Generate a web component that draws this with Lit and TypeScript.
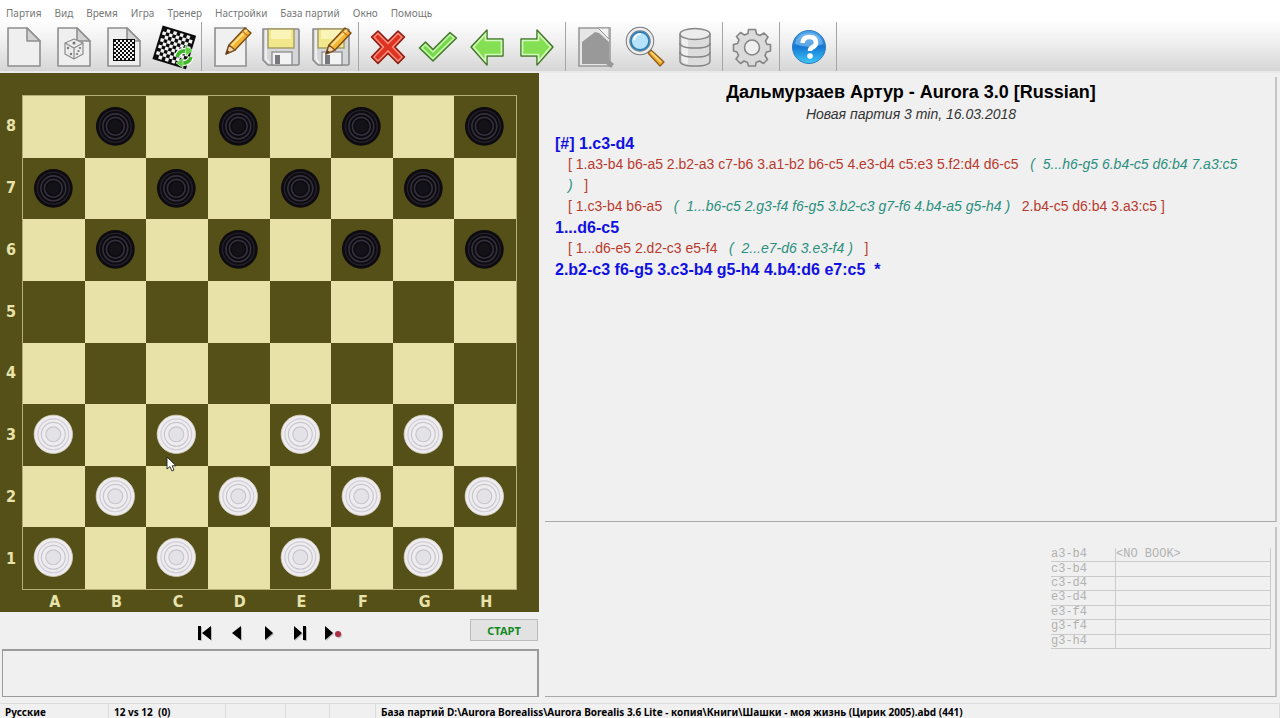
import { LitElement, html, svg, css } from "lit";
import { customElement } from "lit/decorators.js";

const page = svg`
  <path d="M6 3H25L38 16V41H6Z" fill="#efeff0" stroke="#8f8f8f" stroke-width="1.6" stroke-linejoin="round"/>
  <path d="M25 3V16H38Z" fill="#d2d2d2" stroke="#8f8f8f" stroke-width="1.6" stroke-linejoin="round"/>`;

const pencil = svg`
  <path d="M17 29L20 20L36 3L42 8L26 25Z" fill="#f5b431" stroke="#7a4d1c" stroke-width="1.5" stroke-linejoin="round"/>
  <path d="M22 21L38 5" stroke="#ffe08a" stroke-width="2"/>
  <path d="M33 6L39 11" stroke="#b9792a" stroke-width="1.2"/>
  <path d="M17 29L20 20L26 25Z" fill="#f0d3a6" stroke="#7a4d1c" stroke-width="1.2" stroke-linejoin="round"/>
  <path d="M17 29L18 25L21 27Z" fill="#5a3d28"/>`;

const floppy = svg`
  <path d="M4 4H39Q40 4 40 5V39Q40 40 39 40H9L4 35Z" fill="#d5d6d8" stroke="#8b8b8d" stroke-width="1.6" stroke-linejoin="round"/>
  <path d="M7 5V34L10 38" fill="none" stroke="#fff" stroke-width="1.2"/>
  <rect x="9" y="4" width="26" height="19" fill="#f3e78b" stroke="#a39c66" stroke-width="1.4"/>
  <rect x="12" y="5" width="20" height="9" fill="#faf4b9"/>
  <rect x="13" y="27" width="20" height="13" fill="#f3f3f4" stroke="#8b8b8d" stroke-width="1.3"/>
  <rect x="16" y="30" width="5" height="9" fill="#77787b"/>`;

const checks = (n: number, size: number) => {
  const out = [];
  for (let r = 0; r < n; r++)
    for (let c = 0; c < n; c++)
      if ((r + c) % 2) out.push(svg`<rect x=${(c * size) / n} y=${(r * size) / n} width=${size / n} height=${size / n} fill="#f2f2f2"/>`);
  return svg`<rect width=${size} height=${size} fill="#0c0c0c"/>${out}`;
};

const arrow = svg`
  <path d="M5 22L21 5V14H37V31H21V40Z" fill="#84e052" stroke="#47752f" stroke-width="1.5" stroke-linejoin="round"/>
  <path d="M7.5 22L19.5 9V15.5H35.5V29.5H19.5V36Z" fill="none" stroke="#d4f9be" stroke-width="1.6"/>`;

const icons: Record<string, unknown> = {
  "Новая партия": page,
  "Случайная позиция": svg`${page}
    <path d="M22 14L31 18V29L22 34L13 29V18Z" fill="#ececec" stroke="#8c8c8c" stroke-width="1.2" stroke-linejoin="round"/>
    <path d="M13 18L22 23L31 18M22 23V34" fill="none" stroke="#8c8c8c" stroke-width="1.2"/>
    <g fill="#777"><circle cx="22" cy="18" r="1.5"/><circle cx="16" cy="23" r="1.2"/><circle cx="19" cy="29" r="1.2"/><circle cx="25" cy="29" r="1.1"/><circle cx="28" cy="23" r="1.1"/><circle cx="26.5" cy="26" r="1.1"/></g>`,
  "Расстановка": svg`${page}<g transform="translate(12 15)"><rect x="-1" y="-1" width="22" height="22" fill="#0c0c0c"/>${checks(10, 20)}</g>`,
  "Перевернуть доску": svg`
    <g transform="translate(12 3) rotate(17)"><rect x="-2" y="-2" width="35" height="35" fill="#0c0c0c"/>${checks(9, 31)}</g>
    <g fill="none" stroke="#fff" stroke-width="6"><path d="M25 32Q27 25 35 26M39 32Q37 39 29 38"/></g>
    <g fill="none" stroke="#43b52c" stroke-width="3.6"><path d="M25 32Q27 25 35 26M39 32Q37 39 29 38"/></g>
    <path d="M33 21L41 25L34 31ZM31 43L24 38L31 33Z" fill="#5fce45" stroke="#e6ffe0" stroke-width=".6"/>`,
  "Редактировать": svg`
    <path d="M6 3H37V41H6Z" fill="#f0f0f1" stroke="#8f8f8f" stroke-width="1.6"/>${pencil}`,
  "Сохранить": floppy,
  "Сохранить как": svg`${floppy}${pencil}`,
  "Отменить": svg`
    <path d="M12 6L22 16L32 6L38.5 12L29 22L38.5 32L32 38.5L22 28.5L12 38.5L5.5 32L15 22L5.5 12Z" fill="#de3322" stroke="#8a2015" stroke-width="1.5" stroke-linejoin="round"/>
    <path d="M12 8.5L22 18.5L32 8.5L36 12L26.5 22L36 32L32 36L22 26L12 36L8 32L17.5 22L8 12Z" fill="none" stroke="#ff9481" stroke-width="1.3"/>`,
  "Принять": svg`
    <path d="M3.5 23L9.5 17L17 24.5L34 7.5L40.5 13L17 36Z" fill="#76d94a" stroke="#447a2d" stroke-width="1.5" stroke-linejoin="round"/>
    <path d="M6 23L9.5 19.5L17 27L34 10L38 13L17 33.5Z" fill="none" stroke="#cdf7b6" stroke-width="1.4"/>`,
  "Назад": arrow,
  "Вперёд": svg`<g transform="translate(42 0) scale(-1 1)">${arrow}</g>`,
  "Просмотр": svg`
    <path d="M6 3H37V41H6Z" fill="#e6e6e6" stroke="#999" stroke-width="1.6"/>
    <path d="M25 3H36V14Z" fill="#f2f2f2" stroke="#999"/>
    <path d="M9 17L22 7L26 8L36 17V35L41 39L38 43L33 39H9Z" fill="#999"/>`,
  "Найти": svg`
    <path d="M25 28L28 25L41 37L37 41Z" fill="#f2a72b" stroke="#90601b" stroke-width="1.3" stroke-linejoin="round"/>
    <path d="M28 27L38 37" stroke="#ffdc87" stroke-width="1.5"/>
    <circle cx="17" cy="16" r="12" fill="none" stroke="#77797d" stroke-width="4.5"/>
    <circle cx="17" cy="16" r="12" fill="none" stroke="#eee" stroke-width="2.5"/>
    <circle cx="17" cy="16" r="9" fill="#b6e3fa" stroke="#287fb8" stroke-width="1.8"/>
    <path d="M11 15Q12 9 18 9" fill="none" stroke="#f5fcff" stroke-width="2"/>`,
  "База данных": svg`
    <path d="M7 9V36Q7 41 22 41T37 36V9" fill="#dcdcdd" stroke="#858587" stroke-width="1.5"/>
    <path d="M9 12V35Q10 38 15 39V15Z" fill="#f6f6f6" opacity=".7"/>
    <ellipse cx="22" cy="9" rx="15" ry="5.5" fill="#ececed" stroke="#858587" stroke-width="1.5"/>
    <path d="M7 18Q7 23 22 23T37 18M7 27Q7 32 22 32T37 27" fill="none" stroke="#858587" stroke-width="1.5"/>`,
  "Параметры": svg`
    <path d="M18.5 4.5H25.5L26.5 9L30 10.5L34 8L38 12L35.5 16L37 19.5H40.5V26L36.5 27L35 30.5L37.5 34.5L33.5 38.5L29.5 36L26 37.5L25.5 41H18.5L17.5 37.5L14 36L10.5 38.5L6 34L8.5 30.5L7 27L3.5 26V19.5L7.5 18.5L9 15L6.5 11.5L10.5 7.5L14.5 10L18 8.5Z" fill="#dadadb" stroke="#858587" stroke-width="1.6" stroke-linejoin="round"/>
    <circle cx="22" cy="22.5" r="7.5" fill="#efefef" stroke="#858587" stroke-width="1.6"/>`,
  "Справка": svg`
    <defs><linearGradient id="help" x2="0" y2="1"><stop offset="0" stop-color="#4fa3e6"/><stop offset=".5" stop-color="#1478d4"/><stop offset="1" stop-color="#3fc8f7"/></linearGradient></defs>
    <circle cx="22" cy="22" r="16.5" fill="url(#help)" stroke="#2d7cc0"/>
    <path d="M8 19Q10 8 22 8T36 19Q22 25 8 19Z" fill="#9dd0f5" opacity=".5"/>
    <path d="M15.5 18Q16 12 22.5 12T29 17.5Q29 21 25 22.5Q23 23.5 23 26" fill="none" stroke="#fff" stroke-width="4.6"/>
    <circle cx="23" cy="31" r="2.8" fill="#fff"/>`,
};

const toolGroups = [
  ["Новая партия", "Случайная позиция", "Расстановка", "Перевернуть доску"],
  ["Редактировать", "Сохранить", "Сохранить как"],
  ["Отменить", "Принять", "Назад", "Вперёд"],
  ["Просмотр", "Найти", "База данных"],
  ["Параметры"],
  ["Справка"],
];

const menu = ["Партия", "Вид", "Время", "Игра", "Тренер", "Настройки", "База партий", "Окно", "Помощь"];

const position = [
  ".b.b.b.b",
  "b.b.b.b.",
  ".b.b.b.b",
  "........",
  "........",
  "w.w.w.w.",
  ".w.w.w.w",
  "w.w.w.w.",
];

const men: Record<string, unknown> = {
  b: html`<svg class="man" viewBox="0 0 62 62">
    <circle cx="30.5" cy="30.5" r="19.5" fill="#0d0b10"/>
    <circle cx="30.5" cy="30.5" r="16" fill="none" stroke="#24212b" stroke-width="1.4"/>
    <circle cx="30.5" cy="30.5" r="12.5" fill="none" stroke="#34313d" stroke-width="1.6"/>
    <circle cx="30.5" cy="30.5" r="9" fill="none" stroke="#34313d" stroke-width="1.6"/>
    <circle cx="30.5" cy="30.5" r="6.5" fill="#131216"/>
  </svg>`,
  w: html`<svg class="man" viewBox="0 0 62 62">
    <circle cx="30.5" cy="30.5" r="19.3" fill="#eeecef" stroke="#d8d3c4" stroke-width=".8"/>
    <circle cx="30.5" cy="30.5" r="15.5" fill="none" stroke="#d0ced5" stroke-width="1.2"/>
    <circle cx="30.5" cy="30.5" r="12" fill="none" stroke="#c8c6cd" stroke-width="1.2"/>
    <circle cx="30.5" cy="30.5" r="7.5" fill="#e3e2e6" stroke="#c8c6cd" stroke-width="1.2"/>
  </svg>`,
};

const navs: [string, unknown][] = [
  ["В начало", svg`<path d="M3 3H6V17H3ZM16 3V17L7 10Z"/>`],
  ["Ход назад", svg`<path d="M14 3V17L5 10Z"/>`],
  ["Ход вперёд", svg`<path d="M6 3V17L14 10Z"/>`],
  ["В конец", svg`<path d="M3 3V17L11 10ZM12 3H15V17H12Z"/>`],
  ["Запись", svg`<path d="M2 3V17L10 10Z"/><circle cx="15" cy="11" r="3" fill="#ad2b45"/>`],
];

const bookMoves = ["a3-b4", "c3-b4", "c3-d4", "e3-d4", "e3-f4", "g3-f4", "g3-h4"];

@customElement("app-root")
export class AppRoot extends LitElement {
  static styles = css`
    :host {
      display: flex;
      flex-direction: column;
      height: 100vh;
      overflow: hidden;
      background: #f0f0f0;
      font-family: "Noto Sans", sans-serif;
      color: #000;
    }
    button {
      border: 0;
      padding: 0;
      margin: 0;
      background: none;
      font: inherit;
      color: inherit;
    }
    .menu {
      display: flex;
      flex: none;
      gap: 13px;
      height: 22px;
      padding: 4px 6px 0;
      box-sizing: border-box;
      background: #fff;
      font-size: 10px;
      line-height: 18px;
      color: #777;
    }
    .tools {
      display: flex;
      flex: none;
      height: 51px;
      box-sizing: border-box;
      border-bottom: 2px solid #e9e9e9;
      background: linear-gradient(#fdfdfd, #f0f0f0 40%, #d6d6d6);
    }
    .group {
      display: flex;
      border-right: 1px solid #a5a5a5;
      padding-right: 1px;
      margin-right: 5px;
    }
    .tool {
      width: 50px;
      padding: 1px 2px 0 0;
    }
    .tool svg {
      display: block;
      width: 44px;
      height: 44px;
      margin: 0 auto;
      overflow: visible;
    }
    .main {
      flex: 1;
      min-height: 0;
      display: grid;
      grid-template-columns: minmax(0, 539fr) minmax(0, 741fr);
    }
    .left {
      display: flex;
      flex-direction: column;
      min-height: 0;
    }
    .frame {
      display: grid;
      grid-template-columns: 22px 1fr 22px;
      grid-template-rows: 22px auto 22px;
      background: #555018;
      color: #e8e2ab;
      font: bold 16px/24px "DejaVu Sans Condensed", "DejaVu Sans", sans-serif;
      text-align: center;
    }
    .ranks {
      grid-area: 2 / 1;
      display: grid;
      grid-template-rows: repeat(8, 1fr);
      align-items: center;
    }
    .files {
      grid-area: 3 / 2;
      display: grid;
      grid-template-columns: repeat(8, 1fr);
      padding-left: 2px;
    }
    .board {
      grid-area: 2 / 2;
      position: relative;
      display: grid;
      grid-template-columns: repeat(8, 1fr);
      grid-template-rows: repeat(8, 1fr);
      aspect-ratio: 1;
      box-sizing: border-box;
      border: 1px solid #b5ae72;
    }
    .light {
      background: #e8e2a9;
    }
    .dark {
      background: #555018;
    }
    .man {
      display: block;
      width: 100%;
      height: 100%;
    }
    .pointer {
      position: absolute;
      left: 29%;
      top: 73%;
      width: 11px;
      height: 17px;
    }
    .controls {
      display: flex;
      align-items: center;
      flex: none;
      height: 36px;
      padding-left: 195px;
      gap: 12px;
    }
    .nav {
      width: 20px;
      height: 20px;
      margin-top: 5px;
      filter: drop-shadow(1px 1px 0 #bbb);
    }
    .nav svg {
      display: block;
      width: 20px;
      height: 20px;
    }
    .start {
      width: 68px;
      height: 22px;
      margin: 0 1px 0 auto;
      border: 1px solid #bcbcbc;
      background: #e2e2e2;
      color: #148a24;
      font-size: 11px;
      font-weight: bold;
    }
    .log {
      flex: 1;
      margin: 1px 0 6px 2px;
      border: 1px solid #9b9b9b;
      border-width: 2px 2px 1px 1px;
      min-height: 0;
    }
    .right {
      display: grid;
      grid-template-rows: minmax(0, 445fr) minmax(0, 170fr);
      gap: 5px;
      padding: 4px 3px 6px 6px;
      min-height: 0;
    }
    .notation,
    .book {
      border-right: 2px solid #c6c6c6;
      border-bottom: 1px solid #a9a9a9;
      min-height: 0;
      box-sizing: border-box;
    }
    .notation {
      padding: 3px 8px 0 10px;
      font: 14px/21px "Liberation Sans", Arial, sans-serif;
      color: #b93a2f;
    }
    .title {
      margin: 0;
      text-align: center;
      font-size: 18px;
      font-weight: bold;
      line-height: 24px;
      color: #000;
    }
    .sub {
      margin: 0 0 8px;
      text-align: center;
      font-style: italic;
      color: #333;
    }
    .line,
    .variation {
      margin: 0;
      white-space: pre-wrap;
    }
    .line {
      font-size: 16px;
      font-weight: bold;
      color: #1010e2;
    }
    .variation {
      padding-left: 13px;
    }
    .nested {
      color: #2a8f7d;
    }
    .book {
      display: flex;
      justify-content: flex-end;
      align-items: flex-start;
      padding: 21px 4px 0 0;
    }
    .moves {
      width: 220px;
      height: 101px;
      border-collapse: collapse;
      font: 12px/13px "Liberation Mono", monospace;
      color: #b2b2b2;
    }
    .moves th,
    .moves td {
      padding: 0;
      border-bottom: 1px solid #cbcbcb;
      text-align: left;
      font-weight: normal;
    }
    .moves th {
      width: 64px;
    }
    .moves td {
      border-left: 1px solid #cbcbcb;
      border-right: 1px solid #cbcbcb;
    }
    .status {
      display: grid;
      flex: none;
      grid-template-columns: 109px 117px 60px 44px 46px 1fr;
      height: 15px;
      border-top: 1px solid #dcdcdc;
      box-sizing: border-box;
      font-size: 10px;
      font-weight: bold;
      line-height: 16px;
      white-space: pre;
    }
    .status span {
      padding-left: 5px;
      border-right: 1px solid #dcdcdc;
    }
  `;

  render() {
    return html`
      <nav class="menu">${menu.map((m) => html`<button>${m}</button>`)}</nav>
      <div class="tools">
        ${toolGroups.map(
          (g) => html`<div class="group">
            ${g.map((t) => html`<button class="tool" aria-label=${t}><svg viewBox="0 0 44 44">${icons[t]}</svg></button>`)}
          </div>`,
        )}
      </div>
      <div class="main">
        <section class="left">
          <div class="frame">
            <div class="ranks">${[8, 7, 6, 5, 4, 3, 2, 1].map((n) => html`<span>${n}</span>`)}</div>
            <div class="board">
              ${position.map((row, r) =>
                [...row].map((p, c) => html`<div class=${(r + c) % 2 ? "dark" : "light"}>${men[p] ?? ""}</div>`),
              )}
              <svg class="pointer" viewBox="0 0 11 17">
                <path d="M1 1V13L4 10.5L6 15L8 14L6.2 9.8H10Z" fill="#fff" stroke="#222" stroke-width=".9"/>
              </svg>
            </div>
            <div class="files">${[..."ABCDEFGH"].map((f) => html`<span>${f}</span>`)}</div>
          </div>
          <div class="controls">
            ${navs.map(([label, shape]) => html`<button class="nav" aria-label=${label}><svg viewBox="0 0 20 20">${shape}</svg></button>`)}
            <button class="start">СТАРТ</button>
          </div>
          <div class="log"></div>
        </section>
        <section class="right">
          <article class="notation">
            <h1 class="title">Дальмурзаев Артур - Aurora 3.0 [Russian]</h1>
            <p class="sub">Новая партия 3 min, 16.03.2018</p>
            <p class="line">[#] 1.c3-d4</p>
            <p class="variation">[ 1.a3-b4 b6-a5 2.b2-a3 c7-b6 3.a1-b2 b6-c5 4.e3-d4 c5:e3 5.f2:d4 d6-c5  <i class="nested"> (  5...h6-g5 6.b4-c5 d6:b4 7.a3:c5<br />)</i>   ]</p>
            <p class="variation">[ 1.c3-b4 b6-a5  <i class="nested"> (  1...b6-c5 2.g3-f4 f6-g5 3.b2-c3 g7-f6 4.b4-a5 g5-h4 )</i>   2.b4-c5 d6:b4 3.a3:c5 ]</p>
            <p class="line">1...d6-c5</p>
            <p class="variation">[ 1...d6-e5 2.d2-c3 e5-f4  <i class="nested"> (  2...e7-d6 3.e3-f4 )</i>   ]</p>
            <p class="line">2.b2-c3 f6-g5 3.c3-b4 g5-h4 4.b4:d6 e7:c5  *</p>
          </article>
          <div class="book">
            <table class="moves">
              ${bookMoves.map((m, i) => html`<tr><th scope="row">${m}</th><td>${i === 0 ? "<NO BOOK>" : ""}</td></tr>`)}
            </table>
          </div>
        </section>
      </div>
      <footer class="status">
        <span>Русские</span><span>12 vs 12  (0)</span><span></span><span></span><span></span>
        <span>База партий D:\\Aurora Borealiss\\Aurora Borealis 3.6 Lite - копия\\Книги\\Шашки - моя жизнь (Цирик 2005).abd (441)</span>
      </footer>
    `;
  }
}
